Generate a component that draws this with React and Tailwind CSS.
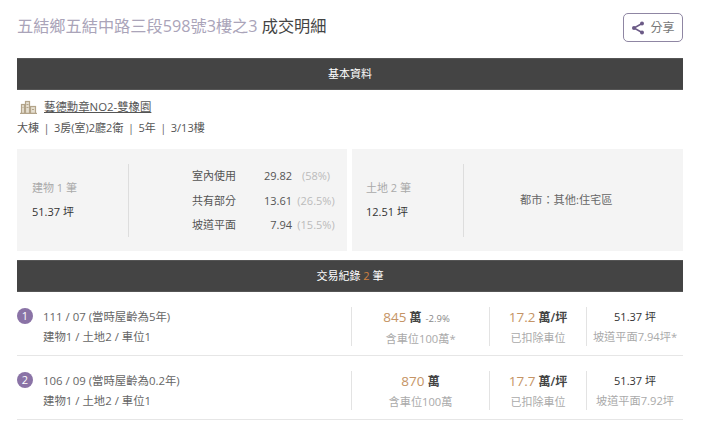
import React from 'react';

const ShareIcon = () => (
  <svg className="w-[14px] h-[14px]" viewBox="0 0 14 14">
    <path d="M11 2.5 L3 7 L11 11.5" fill="none" stroke="#6b5a86" strokeWidth="1.5" />
    <circle cx="11" cy="2.5" r="2" fill="#6b5a86" />
    <circle cx="3" cy="7" r="2" fill="#6b5a86" />
    <circle cx="11" cy="11.5" r="2" fill="#6b5a86" />
  </svg>
);

const BuildingIcon = () => (
  <svg className="w-[17px] h-[14px] ml-[3px]" viewBox="0 0 17 14" fill="#e6dfd0" stroke="#b3a48a" strokeWidth="1.2">
    <rect x="1.5" y="4.5" width="3" height="9" />
    <rect x="5.5" y="1.5" width="4" height="12" />
    <rect x="10.5" y="6.5" width="5" height="7" />
    <path d="M6.5 4.5 H8.5 M6.5 7.5 H8.5 M2.5 7.5 H3.5 M12 9.5 H14" />
    <path d="M0 13.5 H17" strokeWidth="1.4" />
  </svg>
);

const SectionBar = ({ children }) => (
  <div className="h-8 bg-[#444444] border-y border-[#555555] text-white text-[11px] flex items-center justify-center">
    {children}
  </div>
);

const Sep = () => <span className="mx-[4.5px] text-[#666666]">|</span>;

const areaRows = [
  ['室內使用', '29.82', '(58%)'],
  ['共有部分', '13.61', '(26.5%)'],
  ['坡道平面', '7.94', '(15.5%)'],
];

const records = [
  {
    no: 1,
    date: '111 / 07',
    age: '(當時屋齡為5年)',
    price: '845',
    change: '-2.9%',
    parking: '含車位100萬*',
    unit: '17.2',
    size: '坡道平面7.94坪*',
  },
  {
    no: 2,
    date: '106 / 09',
    age: '(當時屋齡為0.2年)',
    price: '870',
    change: null,
    parking: '含車位100萬',
    unit: '17.7',
    size: '坡道平面7.92坪',
  },
];

export default function App() {
  return (
    <div className="w-[720px] h-[427px] overflow-hidden bg-white font-['Open_Sans','Noto_Sans_CJK_TC',sans-serif] text-[#444444]">
      <div className="w-[666px] ml-[17px]">
        {/* Header */}
        <div className="h-[58px] flex items-start justify-between">
          <h1 className="mt-[15px] text-[16.2px] leading-[22px] font-normal text-[#444444]">
            <span className="text-[#aaa4b9]">五結鄉五結中路三段598號3樓之3</span> 成交明細
          </h1>
          <button className="mt-[13px] w-[60px] h-[29px] border border-[#8f86a3] rounded-[5px] flex items-center justify-center gap-[5px] text-[12px] text-[#777777]">
            <ShareIcon />
            分享
          </button>
        </div>

        <SectionBar>基本資料</SectionBar>

        {/* Building info */}
        <div className="mt-[9px] h-4 flex items-center gap-[7px] text-[11.4px]">
          <BuildingIcon />
          <span className="underline text-[#555555]">藝德勳章NO2-雙橡園</span>
        </div>
        <div className="mt-[5px] h-4 text-[11px] leading-4 text-[#555555] whitespace-nowrap">
          大棟<Sep />3房(室)2廳2衛<Sep />5年<Sep />3/13樓
        </div>

        {/* Area panels */}
        <div className="mt-[13px] h-[102px] flex gap-[5px]">
          <div className="w-[330px] bg-[#f4f4f4] flex items-center">
            <div className="w-[111px] pl-[15px]">
              <div className="text-[11px] leading-4 text-[#aaaaaa]">建物 1 筆</div>
              <div className="mt-2 text-[11px] leading-4 text-[#333333]">51.37 坪</div>
            </div>
            <div className="w-px h-[73px] bg-[#dddddd]" />
            <div className="ml-[63px] flex flex-col gap-[9.5px]">
              {areaRows.map(([label, value, pct]) => (
                <div key={label} className="flex items-center h-[15px] text-[11px] leading-[15px]">
                  <span className="w-[45px] text-[#555555]">{label}</span>
                  <span className="w-[55px] text-right text-[#555555]">{value}</span>
                  <span className="ml-[4px] w-[40px] text-center text-[#bbbbbb]">{pct}</span>
                </div>
              ))}
            </div>
          </div>
          <div className="w-[331px] bg-[#f4f4f4] flex items-center">
            <div className="w-[111px] pl-[14px]">
              <div className="text-[11px] leading-4 text-[#aaaaaa]">土地 2 筆</div>
              <div className="mt-2 text-[11px] leading-4 text-[#333333]">12.51 坪</div>
            </div>
            <div className="w-px h-[73px] bg-[#dddddd]" />
            <div className="ml-[56px] text-[11.2px] text-[#666666]">都市：其他:住宅區</div>
          </div>
        </div>

        <div className="mt-[9px]">
          <SectionBar>
            <span>
              交易紀錄 <span className="text-[#d0803f] font-medium">2</span> 筆
            </span>
          </SectionBar>
        </div>

        {/* Records */}
        {records.map((r) => (
          <div key={r.no} className="h-16 pt-[15px] border-b border-[#e6e6e6] flex items-start">
            <div className="flex-1 flex items-start">
              <div className="mt-px w-4 h-4 rounded-full bg-[#8a73a6] text-white text-[11px] leading-4 text-center">{r.no}</div>
              <div className="ml-[10px] text-[11.4px] leading-[20px] text-[#666666]">
                <div>{r.date} {r.age}</div>
                <div>建物1 / 土地2 / 車位1</div>
              </div>
            </div>
            <div className="w-[138px] h-[39px] border-l border-[#e3e3e3] text-center">
              <div className="text-[12px] leading-[20px] text-[#444444]">
                <span className="text-[13.5px] text-[#c59465]">{r.price}</span> <span className="font-semibold">萬</span>
                {r.change && <span className="ml-1 mr-2 text-[9.5px] text-[#888888]">{r.change}</span>}
              </div>
              <div className="text-[11.2px] leading-[20px] text-[#aaaaaa]">{r.parking}</div>
            </div>
            <div className="w-[97px] h-[39px] border-l border-[#e3e3e3] text-center">
              <div className="text-[12px] leading-[20px] text-[#444444]">
                <span className="text-[13.5px] text-[#c59465]">{r.unit}</span> <span className="font-semibold">萬/坪</span>
              </div>
              <div className="text-[11px] leading-[20px] text-[#aaaaaa]">已扣除車位</div>
            </div>
            <div className="w-[97px] h-[39px] border-l border-[#e3e3e3] text-center">
              <div className="text-[11px] leading-[20px] text-[#333333]">51.37 坪</div>
              <div className="text-[11.2px] leading-[20px] text-[#aaaaaa] whitespace-nowrap">{r.size}</div>
            </div>
          </div>
        ))}
      </div>
    </div>
  );
}
